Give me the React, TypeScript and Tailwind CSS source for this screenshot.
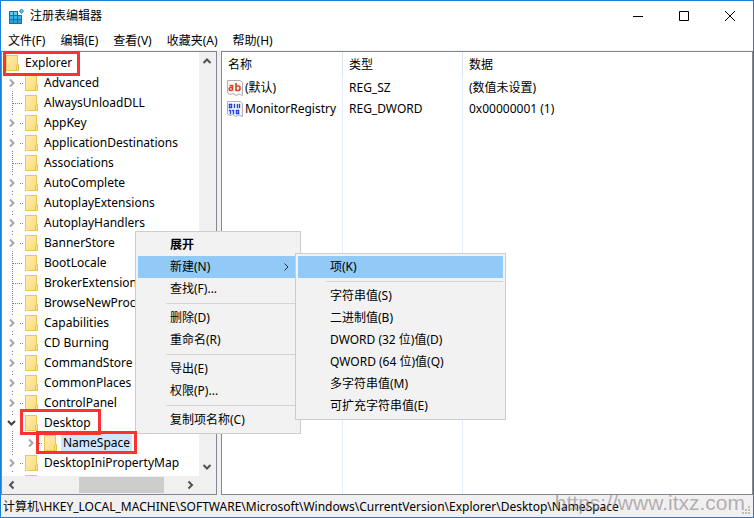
import React from 'react';

interface TreeItem {
  name: string;
  state: 'closed' | 'open' | 'leaf';
  level?: number;
  selected?: boolean;
}

interface MenuEntry {
  label: string;
  bold?: boolean;
  active?: boolean;
  submenu?: boolean;
}

const treeItems: TreeItem[] = [
  { name: 'Advanced', state: 'closed' },
  { name: 'AlwaysUnloadDLL', state: 'leaf' },
  { name: 'AppKey', state: 'closed' },
  { name: 'ApplicationDestinations', state: 'closed' },
  { name: 'Associations', state: 'leaf' },
  { name: 'AutoComplete', state: 'closed' },
  { name: 'AutoplayExtensions', state: 'closed' },
  { name: 'AutoplayHandlers', state: 'closed' },
  { name: 'BannerStore', state: 'closed' },
  { name: 'BootLocale', state: 'leaf' },
  { name: 'BrokerExtensions', state: 'leaf' },
  { name: 'BrowseNewProcess', state: 'leaf' },
  { name: 'Capabilities', state: 'closed' },
  { name: 'CD Burning', state: 'closed' },
  { name: 'CommandStore', state: 'closed' },
  { name: 'CommonPlaces', state: 'closed' },
  { name: 'ControlPanel', state: 'closed' },
  { name: 'Desktop', state: 'open' },
  { name: 'NameSpace', state: 'closed', level: 1, selected: true },
  { name: 'DesktopIniPropertyMap', state: 'closed' },
];

const menuBar = ['文件(F)', '编辑(E)', '查看(V)', '收藏夹(A)', '帮助(H)'];

const contextMenu: MenuEntry[][] = [
  [
    { label: '展开', bold: true },
    { label: '新建(N)', active: true, submenu: true },
    { label: '查找(F)...' },
  ],
  [{ label: '删除(D)' }, { label: '重命名(R)' }],
  [{ label: '导出(E)' }, { label: '权限(P)...' }],
  [{ label: '复制项名称(C)' }],
];

const newMenu: MenuEntry[][] = [
  [{ label: '项(K)', active: true }],
  [
    { label: '字符串值(S)' },
    { label: '二进制值(B)' },
    { label: 'DWORD (32 位)值(D)' },
    { label: 'QWORD (64 位)值(Q)' },
    { label: '多字符串值(M)' },
    { label: '可扩充字符串值(E)' },
  ],
];

const Folder = () => (
  <svg className="shrink-0" width="14" height="16" viewBox="0 0 14 16" aria-hidden="true">
    <defs>
      <linearGradient id="folder" x1="0" y1="0" x2="1" y2="1">
        <stop offset="0" stopColor="#ffeeb0" />
        <stop offset="1" stopColor="#fddb76" />
      </linearGradient>
    </defs>
    <rect x="0.5" y="0.5" width="11" height="15" fill="url(#folder)" stroke="#ecc850" />
    <path d="M10.5 15.5V10.5L11.5 9.5H12.5V15.5Z" fill="#ffe494" stroke="#e6bf45" />
  </svg>
);

const Arrow: React.FC<{ d: string }> = ({ d }) => (
  <svg width="10" height="10" viewBox="0 0 10 10" fill="none" stroke="#505050" strokeWidth="2" aria-hidden="true">
    <path d={d} />
  </svg>
);

const RIGHT = 'M3.5 1.5L7 5L3.5 8.5';
const LEFT = 'M7.5 1.5L4 5L7.5 8.5';
const UP = 'M1.5 7L5 3.5L8.5 7';
const DOWN = 'M1.5 3L5 6.5L8.5 3';

const Guides: React.FC<{ item: TreeItem }> = ({ item }) => (
  <svg className="shrink-0" width="20" height="20" viewBox="0 0 20 20" fill="none" aria-hidden="true">
    {item.state === 'leaf' && <path d="M7.5 0V20M8 10.5H18" stroke="#808080" strokeDasharray="1 1" />}
    {item.state !== 'leaf' && (
      <>
        {!item.level && <path d="M7.5 1V3M7.5 18V20" stroke="#808080" strokeDasharray="1 1" />}
        <path d="M15 10.5H18" stroke="#808080" strokeDasharray="1 1" />
      </>
    )}
    {item.state === 'closed' && <path d="M5 6.5L8.5 10L5 13.5" stroke="#a6a6a6" strokeWidth="2" />}
    {item.state === 'open' && <path d="M3 8L6.5 11.5L10 8" stroke="#404040" strokeWidth="2" />}
  </svg>
);

const TreeRow: React.FC<{ item: TreeItem }> = ({ item }) => (
  <li className="flex h-5 items-center pl-[3px]">
    {item.level && (
      <svg className="shrink-0" width="19" height="20" viewBox="0 0 19 20" aria-hidden="true">
        <path d="M7.5 0V20" stroke="#808080" strokeDasharray="1 1" />
      </svg>
    )}
    <Guides item={item} />
    <Folder />
    <span className={`ml-[3px] whitespace-nowrap px-0.5 leading-5 ${item.selected ? 'bg-[#cce8ff]' : ''}`}>{item.name}</span>
  </li>
);

const PopupMenu: React.FC<{ groups: MenuEntry[][]; label: string; className: string }> = ({ groups, label, className }) => (
  <div role="menu" aria-label={label} className={`absolute border border-[#cccccc] bg-[#f2f2f2] p-0.5 ${className}`}>
    {groups.map((group, i) => (
      <div key={i}>
        {i > 0 && <div className="my-[3px] ml-7 h-px bg-[#d4d4d4]" />}
        {group.map((entry) => (
          <button
            key={entry.label}
            role="menuitem"
            className={`flex h-[22px] w-full items-center justify-between pl-8 pr-1.5 text-left ${
              entry.active ? 'bg-[#91c9f7]' : ''
            } ${entry.bold ? 'font-bold' : ''}`}
          >
            {entry.label}
            {entry.submenu && (
              <svg width="10" height="10" viewBox="0 0 10 10" fill="none" stroke="#303030" aria-hidden="true">
                <path d="M2.5 1.5L6 5L2.5 8.5" />
              </svg>
            )}
          </button>
        ))}
      </div>
    ))}
  </div>
);

const AppIcon = () => (
  <svg width="17" height="17" viewBox="0 0 17 17" aria-hidden="true">
    <path d="M1 3H10V7H14V16H1Z" fill="#1b6f9c" />
    <path d="M2 4H5V7H2ZM6 4H9V7H6Z" fill="#5bcdf2" />
    <path d="M2 8H5V11H2ZM6 8H9V11H6ZM10 8H13V11H10Z" fill="#35b3e6" />
    <path d="M2 12H5V15H2ZM6 12H9V15H6ZM10 12H13V15H10Z" fill="#2aa3dc" />
    <path d="M13.5 1L15.5 3L13.5 5.5L11.5 3Z" fill="#5ac8ee" stroke="#2485b5" />
  </svg>
);

const ValueIcon: React.FC<{ binary?: boolean }> = ({ binary }) => (
  <svg className="shrink-0" width="16" height="16" viewBox="0 0 16 16" fill="none" aria-hidden="true">
    <path d="M0.5 0.5H13.5L15.5 2.5V15.5L12 14L9 15.5L6 13.5L3 14.5L0.5 13Z" fill="#f8f8f8" stroke="#b0b0b0" />
    {binary ? (
      <path
        d="M2 3H5V4H2ZM2 6H5V7H2ZM2 3H3V7H2ZM4 3H5V7H4ZM7 3H8V7H7ZM10 3H11V7H10ZM12 3H13V7H12ZM3 9H4V13H3ZM2 9H3V10H2ZM6 9H7V13H6ZM5 9H6V10H5ZM9 9H12V10H9ZM9 12H12V13H9ZM9 9H10V13H9ZM11 9H12V13H11Z"
        fill="#2346e0"
        stroke="#2346e0"
        strokeWidth="0.4"
      />
    ) : (
      <path
        d="M2.5 5.5H5.5V10.5M5.5 7.5H3Q1.5 9 3 10.5H5.5M9 3V11M9 6H11.5Q13 6 13 8.2T11.5 10.5H9"
        stroke="#d9472b"
        strokeWidth="1.7"
      />
    )}
  </svg>
);

const App: React.FC = () => (
  <div className="relative flex h-screen flex-col overflow-hidden border border-[#1a7fd4] bg-[#f0f0f0] font-['Noto_Sans','Noto_Sans_CJK_SC',sans-serif] text-xs text-black">
    <header className="flex h-[30px] shrink-0 items-center justify-between bg-white pl-[7px]">
      <h1 className="flex items-center gap-[5px]">
        <AppIcon />
        <span>注册表编辑器</span>
      </h1>
      <div className="flex">
        <button aria-label="最小化" className="flex h-7 w-[46px] items-center justify-center">
          <svg width="10" height="10" viewBox="0 0 10 10" stroke="#000"><path d="M0 5.5H10" /></svg>
        </button>
        <button aria-label="最大化" className="flex h-7 w-[46px] items-center justify-center">
          <svg width="10" height="10" viewBox="0 0 10 10" fill="none" stroke="#000"><path d="M0.5 0.5H9.5V9.5H0.5Z" /></svg>
        </button>
        <button aria-label="关闭" className="flex h-7 w-[46px] items-center justify-center">
          <svg width="10" height="10" viewBox="0 0 10 10" stroke="#000"><path d="M0 0L10 10M10 0L0 10" /></svg>
        </button>
      </div>
    </header>

    <nav className="flex h-[19px] shrink-0 items-center gap-[15px] bg-white pl-[7px]">
      {menuBar.map((name) => (
        <button key={name}>{name}</button>
      ))}
    </nav>

    <main className="mt-px flex min-h-0 flex-1 gap-1">
      <section className="flex w-[216px] shrink-0 flex-col border border-[#828790] bg-white">
        <div className="flex min-h-0 flex-1">
          <ul className="min-w-0 flex-1 overflow-hidden pt-px">
            <li className="flex h-5 items-center pl-1">
              <Folder />
              <span className="ml-[3px] px-0.5">Explorer</span>
            </li>
            {treeItems.map((item) => (
              <TreeRow key={item.name} item={item} />
            ))}
            <li className="flex h-5 items-center pl-[23px]">
              <Folder />
            </li>
          </ul>
          <div className="flex w-[17px] shrink-0 flex-col items-center justify-between bg-[#f0f0f0] py-1 pr-0.5">
            <Arrow d={UP} />
            <Arrow d={DOWN} />
          </div>
        </div>
        <div className="flex h-[18px] shrink-0 items-center bg-[#f0f0f0] pl-1 pr-[21px]">
          <Arrow d={LEFT} />
          <div className="flex h-4 flex-1 pl-[63px]">
            <div className="w-[85px] bg-[#cdcdcd]" />
          </div>
          <Arrow d={RIGHT} />
        </div>
      </section>

      <section className="min-w-0 flex-1 border border-[#828790] bg-white">
        <table className="h-full w-full table-fixed border-separate border-spacing-0 text-left">
          <thead>
            <tr className="h-[25px]">
              <th className="w-[121px] border-r border-[#e0e6ee] p-0 pl-1.5 font-normal">名称</th>
              <th className="w-[120px] border-r border-[#e0e6ee] p-0 pl-1.5 font-normal">类型</th>
              <th className="p-0 pl-1.5 font-normal">数据</th>
            </tr>
          </thead>
          <tbody>
            <tr className="h-[21px]">
              <td className="border-r border-[#e4effd] p-0 pl-[5px]">
                <div className="flex items-center gap-0.5"><ValueIcon />(默认)</div>
              </td>
              <td className="border-r border-[#e4effd] p-0 pl-1.5">REG_SZ</td>
              <td className="p-0 pl-1.5">(数值未设置)</td>
            </tr>
            <tr className="h-[21px]">
              <td className="border-r border-[#e4effd] p-0 pl-[5px]">
                <div className="flex items-center gap-0.5"><ValueIcon binary />MonitorRegistry</div>
              </td>
              <td className="border-r border-[#e4effd] p-0 pl-1.5">REG_DWORD</td>
              <td className="p-0 pl-1.5">0x00000001 (1)</td>
            </tr>
            <tr>
              <td className="border-r border-[#e4effd]" />
              <td className="border-r border-[#e4effd]" />
              <td />
            </tr>
          </tbody>
        </table>
      </section>
    </main>

    <footer className="mt-0.5 flex h-5 shrink-0 items-center justify-between pl-0.5">
      <span className="whitespace-nowrap">
        计算机\HKEY_LOCAL_MACHINE\SOFTWARE\Microsoft\Windows\CurrentVersion\Explorer\Desktop\NameSpace
      </span>
      <svg className="self-end" width="11" height="11" viewBox="0 0 11 11" fill="#bfbfbf" aria-hidden="true">
        <path d="M6 0H8V2H6ZM3 3H5V5H3ZM6 3H8V5H6ZM0 6H2V8H0ZM3 6H5V8H3ZM6 6H8V8H6Z" />
      </svg>
    </footer>

    <PopupMenu groups={contextMenu} label="项" className="left-[134px] top-[230px] w-[166px]" />
    <PopupMenu groups={newMenu} label="新建" className="left-[294px] top-[252px] w-[211px]" />

    <div className="absolute left-0.5 top-[50px] h-[25px] w-[77px] border-3 border-[#fb3232]" />
    <div className="absolute left-[19px] top-[408px] h-[26px] w-[81px] border-3 border-[#fb3232]" />
    <div className="absolute left-[35px] top-[430px] h-[23px] w-[101px] border-3 border-[#fb3232]" />

    <div className="pointer-events-none absolute bottom-0 right-2 font-['Liberation_Sans',sans-serif] text-[21px] leading-7 text-[#8a7f85]/60">
      https://www.itxz.com
    </div>
  </div>
);

export default App;
